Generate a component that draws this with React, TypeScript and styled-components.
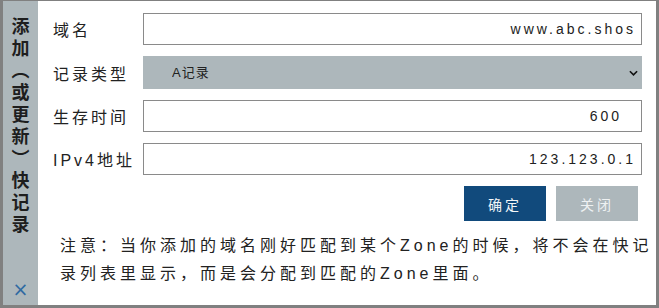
import styled, { createGlobalStyle } from "styled-components";

const GlobalStyle = createGlobalStyle`
  html, body {
    margin: 0;
    padding: 0;
    background: #fff;
  }
  body {
    font-family: "Liberation Sans", "Noto Sans CJK SC", sans-serif;
    color: #222;
  }
`;

type Field = {
  label: string;
  value: string;
  padRight?: number;
};

const fields: Field[] = [
  { label: "生存时间", value: "600", padRight: 19 },
  { label: "IPv4地址", value: "123.123.0.1" },
];

const App = () => {
  return (
    <>
      <GlobalStyle />
      <Dialog>
        <Sidebar>
          <Title>添加（或更新）快记录</Title>
          <Close>×</Close>
        </Sidebar>
        <Main>
          <Row>
            <Label>域名</Label>
            <Input type="text" defaultValue="www.abc.shos" readOnly />
          </Row>
          <Row>
            <Label>记录类型</Label>
            <SelectWrap>
              <Select defaultValue="A">
                <option value="A">A记录</option>
                <option value="CNAME">CNAME记录</option>
              </Select>
              <Chevron viewBox="0 0 10 6">
                <path d="M1 1l4 4 4-4" fill="none" stroke="#111" strokeWidth="1.8" />
              </Chevron>
            </SelectWrap>
          </Row>
          {fields.map((f) => (
            <Row key={f.label}>
              <Label>{f.label}</Label>
              <Input type="text" defaultValue={f.value} $padRight={f.padRight} readOnly />
            </Row>
          ))}
          <Actions>
            <Button $primary>确定</Button>
            <Button>关闭</Button>
          </Actions>
          <Note>
            注意：当你添加的域名刚好匹配到某个Zone的时候，将不会在快记录列表里显示，而是会分配到匹配的Zone里面。
          </Note>
        </Main>
      </Dialog>
    </>
  );
};

const Dialog = styled.div`
  box-sizing: border-box;
  width: 659px;
  height: 308px;
  display: flex;
  border: 3px solid #808080;
  border-top-width: 1px;
  background: #fff;
`;

const Sidebar = styled.aside`
  width: 35px;
  flex: none;
  background: #adb7bb;
  display: flex;
  flex-direction: column;
  align-items: center;
  justify-content: space-between;
  padding: 16px 0 6px;
  box-sizing: border-box;
`;

const Title = styled.h2`
  margin: 0;
  writing-mode: vertical-rl;
  font-family: "Noto Sans CJK SC", sans-serif;
  font-size: 18px;
  font-weight: 700;
  letter-spacing: 4px;
  line-height: 1;
  color: #1e1e1e;
`;

const Close = styled.span`
  font-family: "DejaVu Sans", sans-serif;
  font-size: 19px;
  line-height: 1;
  color: #2f6aa2;
  cursor: pointer;
`;

const Main = styled.main`
  flex: 1;
  padding: 12px 14px 0 15px;
  display: flex;
  flex-direction: column;
  gap: 11px;
`;

const Row = styled.div`
  display: grid;
  grid-template-columns: 90px 1fr;
  align-items: center;
`;

const Label = styled.label`
  font-size: 16px;
  letter-spacing: 3px;
  color: #222;
`;

const Input = styled.input<{ $padRight?: number }>`
  box-sizing: border-box;
  height: 32px;
  width: 100%;
  border: 1px solid #8a8a8a;
  padding: 0 ${(p) => p.$padRight ?? 5}px 0 8px;
  text-align: right;
  font-family: "Liberation Sans", sans-serif;
  font-size: 14px;
  letter-spacing: 3px;
  color: #222;
  background: #fff;
  outline: none;
`;

const SelectWrap = styled.div`
  position: relative;
  height: 33px;
`;

const Select = styled.select`
  appearance: none;
  box-sizing: border-box;
  width: 100%;
  height: 33px;
  border: none;
  background: #adb7bb;
  padding: 0 0 0 29px;
  font-family: "Liberation Sans", "Noto Sans CJK SC", sans-serif;
  font-size: 13px;
  letter-spacing: 1px;
  color: #222;
  outline: none;
`;

const Chevron = styled.svg`
  position: absolute;
  right: 4px;
  top: 14px;
  width: 9px;
  height: 6px;
  pointer-events: none;
`;

const Actions = styled.div`
  display: flex;
  justify-content: flex-end;
  gap: 10px;
  padding-right: 4px;
`;

const Button = styled.button<{ $primary?: boolean }>`
  width: 82px;
  height: 35px;
  border: none;
  background: ${(p) => (p.$primary ? "#114a7c" : "#adb7bb")};
  color: ${(p) => (p.$primary ? "#f4f6f8" : "#eef1f2")};
  font-family: "Noto Sans CJK SC", sans-serif;
  font-size: 14px;
  letter-spacing: 3px;
  cursor: pointer;
`;

const Note = styled.p`
  margin: 0 -14px 0 7px;
  font-family: "Liberation Sans", "Noto Sans CJK SC", sans-serif;
  font-size: 16px;
  letter-spacing: 4px;
  line-height: 28px;
  color: #222;
`;

export default App;
